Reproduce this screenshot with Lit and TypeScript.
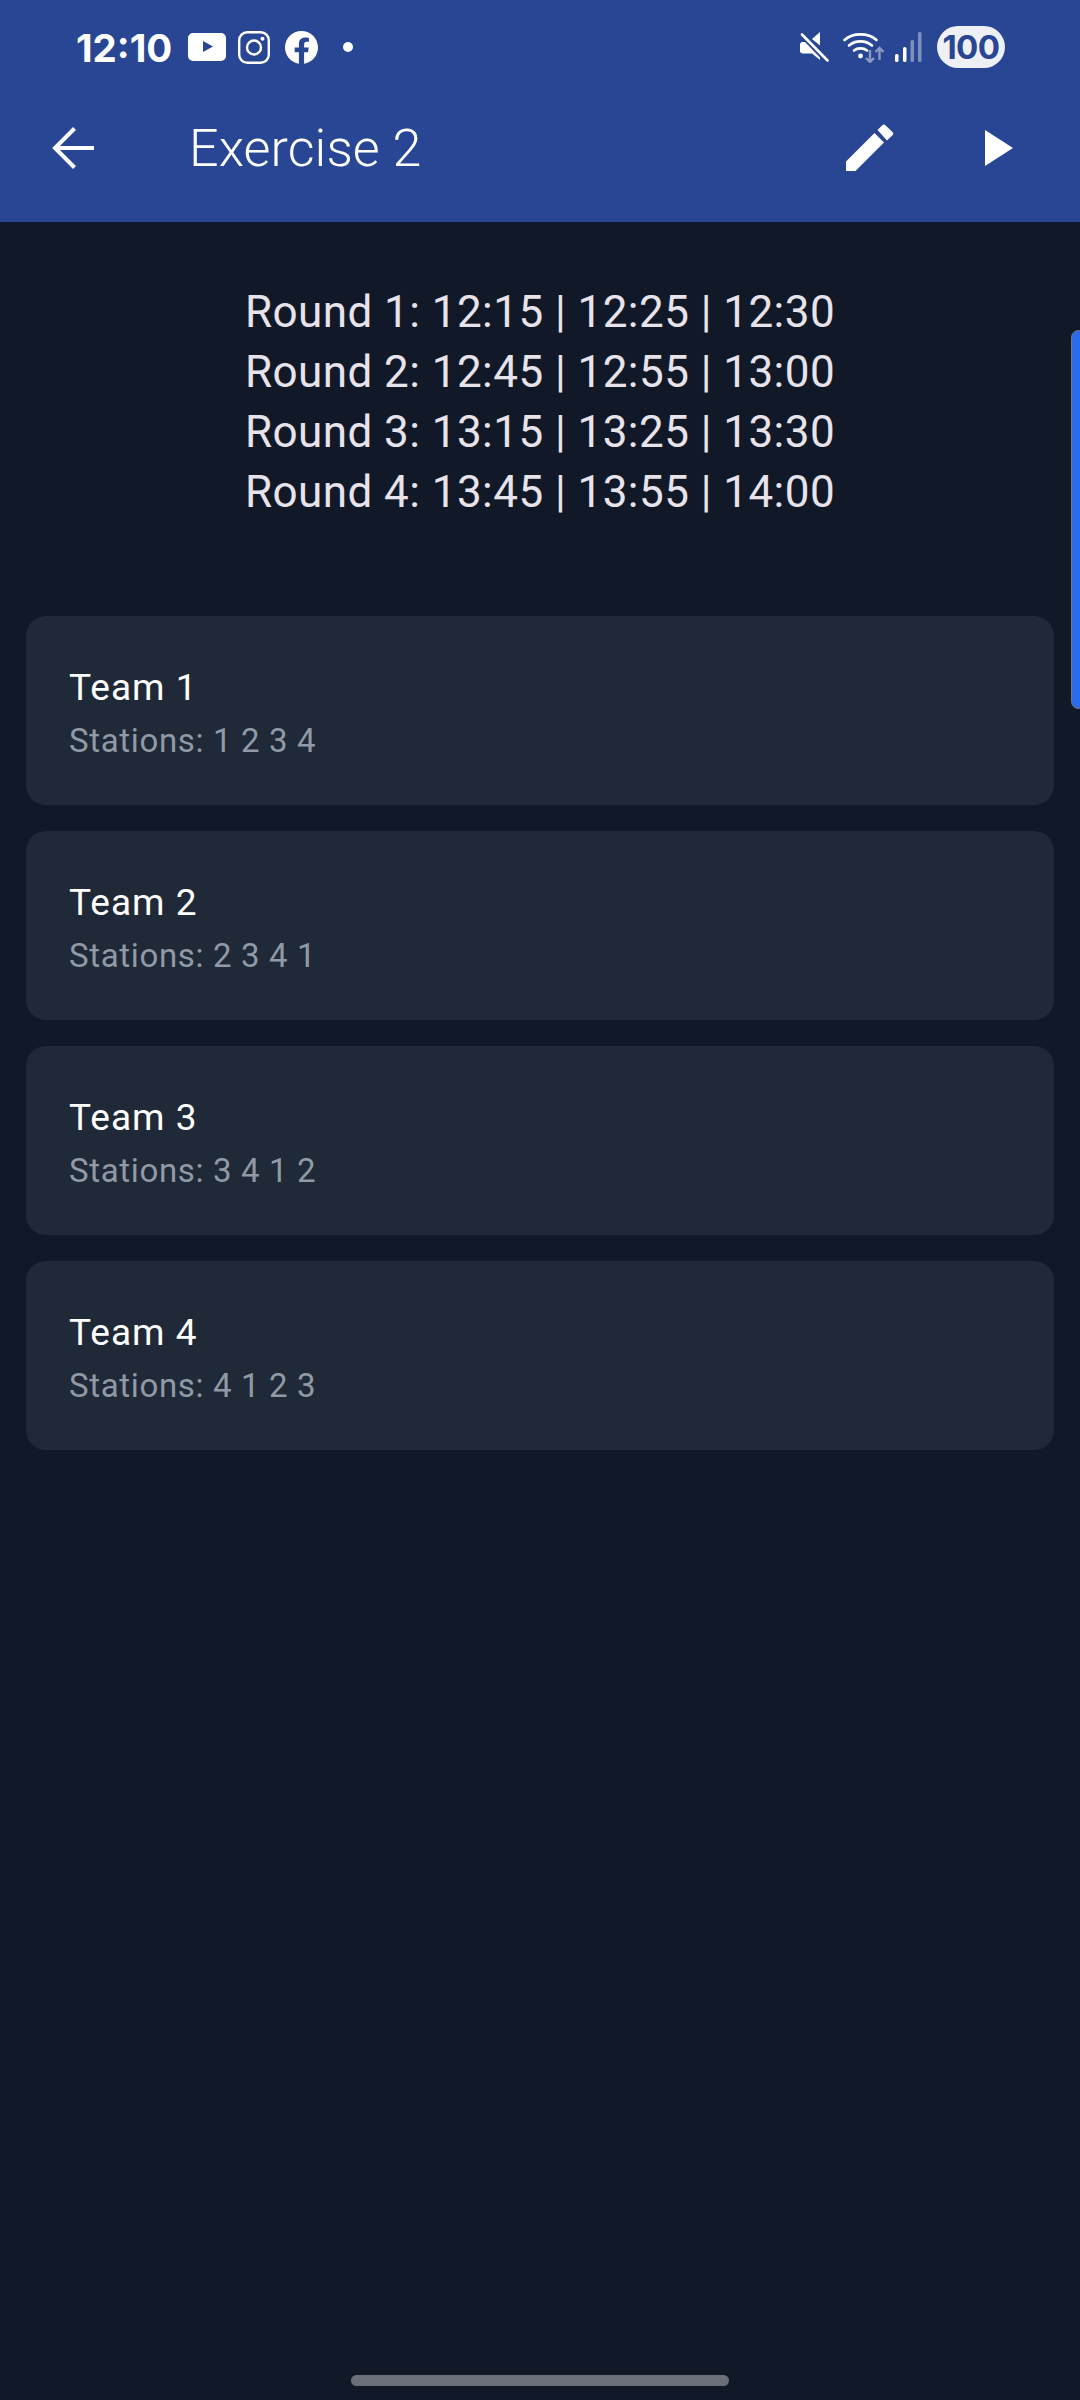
import {LitElement, html, css, svg} from 'lit';
import {customElement} from 'lit/decorators.js';

const rounds = [
  'Round 1: 12:15 | 12:25 | 12:30',
  'Round 2: 12:45 | 12:55 | 13:00',
  'Round 3: 13:15 | 13:25 | 13:30',
  'Round 4: 13:45 | 13:55 | 14:00',
];

const teams = [
  {name: 'Team 1', stations: '1 2 3 4'},
  {name: 'Team 2', stations: '2 3 4 1'},
  {name: 'Team 3', stations: '3 4 1 2'},
  {name: 'Team 4', stations: '4 1 2 3'},
];

const youtube = svg`<svg viewBox="0 0 38 28" width="38" height="28">
  <path fill="#fff" fill-rule="evenodd" d="M5 0h28a5 5 0 0 1 5 5v18a5 5 0 0 1-5 5H5a5 5 0 0 1-5-5V5a5 5 0 0 1 5-5zM15 8v11l10-5.500z"/>
</svg>`;

const instagram = svg`<svg viewBox="0 0 32 33" width="32" height="33" fill="none" stroke="#fff">
  <rect x="1.200" y="1.200" width="29.600" height="30.600" rx="8" stroke-width="2.400"/>
  <circle cx="16" cy="16.500" r="7" stroke-width="2.400"/>
  <circle cx="24.500" cy="7.800" r="2" fill="#fff" stroke="none"/>
</svg>`;

const facebook = svg`<svg viewBox="0 0 33 33" width="33" height="33">
  <path fill="#fff" d="M33 16.500C33 7.400 25.600 0 16.500 0S0 7.400 0 16.500c0 8.200 6 15 13.900 16.300V21.300H9.700v-4.800h4.200v-3.600c0-4.200 2.500-6.500 6.300-6.500 1.800 0 3.700.3 3.700.3v4.100h-2.100c-2 0-2.700 1.300-2.700 2.600v3.100h4.600l-.7 4.800h-3.900v11.500C27 31.500 33 24.700 33 16.500z"/>
</svg>`;

const mute = svg`<svg viewBox="0 0 29 30" width="29" height="30">
  <path fill="#fff" d="M0 12.500C0 11 1 10 2.500 10H5l15 15.500V28l-8-6.500H3c-2 0-3-1-3-2.500zM12 7l8-7v13.500z"/>
  <path stroke="#fff" stroke-width="2.600" stroke-linecap="round" d="M2 2.500L27.500 28.500"/>
</svg>`;

const wifi = svg`<svg viewBox="0 0 41 31" width="41" height="31" fill="none">
  <g stroke="#fff" stroke-width="2.600" stroke-linecap="round">
    <path d="M1.500 8C10 .500 25 .500 33.500 8"/>
    <path d="M6 13.500c6.500-5.500 16.500-5.500 23 0"/>
    <path d="M11 18.500c3.500-2.800 9.500-2.800 13 0"/>
  </g>
  <circle cx="17.500" cy="24" r="2.400" fill="#fff"/>
  <g stroke="#fff" stroke-opacity=".45" stroke-width="2.400">
    <path d="M27 18v12M23 26l4 4 4-4"/>
    <path d="M36.500 28V16M32.500 20l4-4 4 4"/>
  </g>
</svg>`;

const signal = svg`<svg viewBox="0 0 27 30" width="27" height="30">
  <rect x="0" y="22" width="3.500" height="8" rx="1.500" fill="#fff"/>
  <rect x="8" y="15" width="3.500" height="15" rx="1.500" fill="#fff"/>
  <rect x="15.500" y="8" width="3.500" height="22" rx="1.500" fill="#fff" fill-opacity=".4"/>
  <rect x="23" y="0" width="3.500" height="30" rx="1.500" fill="#fff" fill-opacity=".4"/>
</svg>`;

const back = svg`<svg viewBox="0 0 42 42" width="42" height="42" fill="none" stroke="#fff" stroke-width="4">
  <path d="M42 21H3M22.500 1.500L3 21l19.500 19.500"/>
</svg>`;

const pencil = svg`<svg viewBox="0 0 48 48" width="48" height="48">
  <path fill="#fff" d="M0 37.500L28.500 9 38 18.500 9.500 47H0zM31.500 6l5-5c.8-.8 1.800-.8 2.600 0l7.600 7.300c.8.800.8 1.800 0 2.600L41 16.500z"/>
</svg>`;

const play = svg`<svg viewBox="0 0 28 36" width="28" height="36">
  <path fill="#fff" d="M0 0l28 18L0 36z"/>
</svg>`;

@customElement('app-root')
export class AppRoot extends LitElement {
  static styles = css`
    :host {
      display: block;
      position: relative;
      height: 2400px;
      background: #111928;
      font-family: Roboto, "Liberation Sans", sans-serif;
      overflow: hidden;
    }

    .header {
      height: 222px;
      background: #284693;
      color: #fff;
    }

    .status {
      height: 84px;
      box-sizing: border-box;
      padding: 30px 75px 0 76px;
      display: flex;
      align-items: flex-start;
    }

    .time {
      font-family: Inter, Roboto, sans-serif;
      font-size: 38.500px;
      line-height: 36px;
      font-weight: 700;
      width: 112px;
    }

    .app-icons {
      display: flex;
      align-items: center;
      gap: 12px;
      height: 34px;
    }

    .fb {
      display: flex;
      margin-left: 3px;
    }

    .dot {
      width: 10px;
      height: 10px;
      border-radius: 50%;
      background: #fff;
      margin-left: 13px;
    }

    .system {
      margin-left: auto;
      display: flex;
      align-items: center;
      height: 34px;
    }

    .system span {
      display: flex;
    }

    .system .w {
      margin-left: 14px;
      margin-right: 11px;
    }

    .system .s {
      margin-right: 15px;
    }

    .battery {
      width: 68px;
      height: 42px;
      border-radius: 21px;
      background: #eff0f6;
      color: #284693;
      font-family: Inter, Roboto, sans-serif;
      font-size: 33px;
      font-weight: 700;
      letter-spacing: -0.5px;
      line-height: 42px;
      text-align: center;
    }

    .toolbar {
      height: 128px;
      display: flex;
      align-items: center;
      padding: 0 67px 0 52px;
    }

    .title {
      margin-left: 95px;
      font-size: 52px;
      font-weight: 300;
      letter-spacing: 0.1px;
      flex: 1;
    }

    .edit {
      display: flex;
      margin-right: 91px;
    }

    .schedule {
      margin-top: 60px;
      text-align: center;
      color: #e8e3eb;
      font-size: 44px;
      font-weight: 400;
      line-height: 60px;
      letter-spacing: 0.45px;
    }

    .teams {
      margin-top: 94px;
      padding: 0 26px;
      display: flex;
      flex-direction: column;
      gap: 26px;
    }

    .card {
      height: 189px;
      box-sizing: border-box;
      padding: 50px 43px 0;
      border-radius: 20px;
      background: #1f2937;
    }

    .name {
      color: #fff;
      font-size: 37px;
      font-weight: 400;
      line-height: 44px;
      letter-spacing: 1px;
    }

    .stations {
      margin-top: 10px;
      color: #9199a6;
      font-size: 33px;
      font-weight: 400;
      line-height: 42px;
      letter-spacing: 0.65px;
    }

    .scrollbar {
      position: absolute;
      left: 1071px;
      top: 330px;
      width: 15px;
      height: 379px;
      box-sizing: border-box;
      border: 1.500px solid #73777f;
      border-radius: 8px;
      background: #2a6cec;
    }

    .home-bar {
      position: absolute;
      left: 351px;
      top: 2375px;
      width: 378px;
      height: 11px;
      border-radius: 6px;
      background: #6b6f79;
    }
  `;

  render() {
    return html`
      <div class="header">
        <div class="status">
          <div class="time">12:10</div>
          <div class="app-icons">
            ${youtube}${instagram}<span class="fb">${facebook}</span>
            <div class="dot"></div>
          </div>
          <div class="system">
            ${mute}
            <span class="w">${wifi}</span>
            <span class="s">${signal}</span>
            <div class="battery">100</div>
          </div>
        </div>
        <div class="toolbar">
          ${back}
          <div class="title">Exercise 2</div>
          <span class="edit">${pencil}</span>
          ${play}
        </div>
      </div>
      <div class="schedule">
        ${rounds.map((r) => html`<div>${r}</div>`)}
      </div>
      <div class="teams">
        ${teams.map(
          (t) => html`
            <div class="card">
              <div class="name">${t.name}</div>
              <div class="stations">Stations: ${t.stations}</div>
            </div>
          `
        )}
      </div>
      <div class="scrollbar"></div>
      <div class="home-bar"></div>
    `;
  }
}
